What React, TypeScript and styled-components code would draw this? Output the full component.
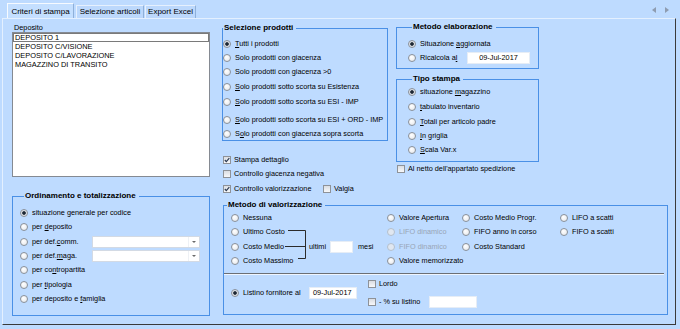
import React from 'react'
import styled, { createGlobalStyle } from 'styled-components'

const GlobalStyle = createGlobalStyle`
  html, body {
    margin: 0;
    padding: 0;
    background: #bedbff;
  }
  body {
    font-family: "Liberation Sans", Arial, sans-serif;
    font-size: 7.3px;
    color: #000;
  }
  u {
    text-underline-offset: 1px;
  }
`

const Window = styled.div`
  width: 680px;
  height: 329px;
  background: #bedbff;
  overflow: hidden;
`

const TabStrip = styled.div`
  display: flex;
  align-items: flex-end;
  height: 18px;
  padding-left: 7px;
`

interface TabProps {
  $active?: boolean
  $w: number
  $mr: number
}

const Tab = styled.div<TabProps>`
  box-sizing: border-box;
  width: ${(p) => p.$w}px;
  height: ${(p) => (p.$active ? 15 : 13)}px;
  margin-right: ${(p) => p.$mr}px;
  padding-top: ${(p) => (p.$active ? 2 : 0)}px;
  font-size: 8px;
  line-height: 12px;
  text-align: center;
  white-space: nowrap;
  border: 1px solid ${(p) => (p.$active ? '#f6faff' : '#e6f0fd')};
  border-bottom: none;
  border-right-color: #8fb0d9;
  background: ${(p) => (p.$active ? '#c4dfff' : '#bcd8fc')};
`

const Scroller = styled.div`
  display: flex;
  gap: 9px;
  align-self: flex-start;
  margin: 7px 11px 0 auto;
`

const Arrow = styled.span<{ $right?: boolean }>`
  width: 0;
  height: 0;
  border-top: 3px solid transparent;
  border-bottom: 3px solid transparent;
  ${(p) => (p.$right ? 'border-left' : 'border-right')}: 4px solid #8e9cb1;
`

const Panel = styled.div`
  box-sizing: border-box;
  display: flex;
  width: 674px;
  height: 307px;
  margin-left: 2px;
  padding: 3px 0 0 9px;
  border: 1px solid;
  border-color: #e4f0ff #3a3a3a #3a3a3a #e4f0ff;
`

const LeftCol = styled.div`
  display: flex;
  flex-direction: column;
  width: 198px;
  flex: none;
`

const FieldLabel = styled.div`
  height: 9px;
  line-height: 9px;
  margin: 1px 0 0 2px;
`

const ListBox = styled.div`
  box-sizing: border-box;
  height: 145px;
  background: #fff;
  border: 1px solid #858a92;
`

const ListItem = styled.div<{ $focus?: boolean }>`
  box-sizing: border-box;
  height: 9px;
  padding-left: 1px;
  font-size: 7.4px;
  line-height: 7px;
  white-space: nowrap;
  border: 1px solid ${(p) => (p.$focus ? '#7a7a7a' : 'transparent')};
`

interface GroupProps {
  $w?: number
  $h: number
  $mt?: number
  $ml?: number
  $pt?: number
  $pl?: number
}

const Group = styled.fieldset<GroupProps>`
  box-sizing: border-box;
  min-inline-size: 0;
  width: ${(p) => (p.$w ? `${p.$w}px` : 'auto')};
  height: ${(p) => p.$h}px;
  margin: ${(p) => p.$mt ?? 0}px 0 0 ${(p) => p.$ml ?? 0}px;
  padding: ${(p) => p.$pt ?? 0}px 0 0 ${(p) => p.$pl ?? 0}px;
  border: 1px solid #4a90e6;
  flex: none;
`

const GroupTitle = styled.legend<{ $indent: number }>`
  margin-left: ${(p) => p.$indent}px;
  padding: 0 3px 0 1px;
  font-size: 8px;
  font-weight: bold;
  line-height: 10px;
`

interface RowProps {
  $h?: number
  $mt?: number
  $ml?: number
  $w?: number
  $off?: boolean
}

const Row = styled.div<RowProps>`
  display: flex;
  align-items: center;
  gap: 4px;
  flex: none;
  width: ${(p) => (p.$w ? `${p.$w}px` : 'auto')};
  height: ${(p) => p.$h ?? 12}px;
  margin: ${(p) => p.$mt ?? 0}px 0 0 ${(p) => p.$ml ?? 0}px;
  line-height: 12px;
  white-space: nowrap;
  color: ${(p) => (p.$off ? '#98a5b6' : '#000')};
`

const CheckRow = styled(Row)`
  gap: 3px;
`

const Radio = styled.span<{ $on?: boolean; $off?: boolean }>`
  box-sizing: border-box;
  flex: none;
  width: 8px;
  height: 8px;
  border-radius: 50%;
  border: 1px solid ${(p) => (p.$off ? '#b3bfcd' : '#8a9099')};
  background: ${(p) =>
    p.$on
      ? 'radial-gradient(circle, #1c2633 0 1.4px, #d9dde3 2.2px, #ffffff 100%)'
      : p.$off
        ? '#e0e7f0'
        : 'radial-gradient(circle at 40% 35%, #ffffff 0, #e2e5e9 100%)'};
`

const Box = styled.span`
  box-sizing: border-box;
  flex: none;
  display: flex;
  align-items: center;
  justify-content: center;
  width: 8px;
  height: 8px;
  border: 1px solid #8e9298;
  background: linear-gradient(#dadde2, #f7f8fa);
`

const Caption = styled.span<{ $w?: number }>`
  display: inline-block;
  width: ${(p) => (p.$w ? `${p.$w}px` : 'auto')};
`

const Combo = styled.div`
  box-sizing: border-box;
  display: flex;
  justify-content: flex-end;
  width: 108px;
  height: 12px;
  background: #fff;
  border: 1px solid #d3dae4;
`

const ComboButton = styled.span`
  display: flex;
  align-items: center;
  justify-content: center;
  width: 10px;
  border-left: 1px solid #eef1f5;
  &::after {
    content: '';
    border-left: 2px solid transparent;
    border-right: 2px solid transparent;
    border-top: 2px solid #6a6a6a;
  }
`

const Field = styled.div<{ $w: number; $ml?: number; $center?: boolean }>`
  box-sizing: border-box;
  flex: none;
  width: ${(p) => p.$w}px;
  height: 12px;
  margin-left: ${(p) => p.$ml ?? 0}px;
  padding: 0 3px;
  background: #fff;
  border: 1px solid #e6edf6;
  line-height: 10px;
  text-align: ${(p) => (p.$center ? 'center' : 'left')};
`

const RightArea = styled.div`
  display: flex;
  flex-direction: column;
  margin-left: 12px;
`

const TopRow = styled.div`
  display: flex;
`

const Column = styled.div<{ $w: number; $mt?: number; $ml?: number }>`
  display: flex;
  flex-direction: column;
  width: ${(p) => p.$w}px;
  margin: ${(p) => p.$mt ?? 0}px 0 0 ${(p) => p.$ml ?? 0}px;
  flex: none;
`

const ValGrid = styled.div`
  display: grid;
  grid-template-columns: 156px 75px 98px 1fr;
  padding: 1px 0 0 7px;
`

const Stack = styled.div<{ $w?: number }>`
  display: flex;
  flex-direction: column;
  width: ${(p) => (p.$w ? `${p.$w}px` : 'auto')};
  flex: none;
`

const Bracketed = styled.div`
  display: flex;
`

const Months = styled.div`
  display: flex;
  align-items: center;
  gap: 4px;
  height: 14.33px;
  margin: 28.66px 0 0 2px;
  white-space: nowrap;
`

const Separator = styled.div`
  height: 0;
  margin: 4.5px 3px 0 0;
  border-top: 1px solid #6b6f75;
  border-bottom: 1px solid #eef5ff;
`

const Listino = styled.div`
  display: flex;
  align-items: center;
  padding: 3px 0 0 7px;
`

const Check = () => (
  <svg width="6" height="6" viewBox="0 0 6 6">
    <path d="M0.8 3 L2.3 4.6 L5.3 1.1" fill="none" stroke="#26364f" strokeWidth="1.1" />
  </svg>
)

interface OptProps {
  on?: boolean
  off?: boolean
  h?: number
  mt?: number
  w?: number
  children: React.ReactNode
}

const Opt: React.FC<OptProps> = ({ on, off, h, mt, w, children }) => (
  <Row $h={h} $mt={mt} $w={w} $off={off}>
    <Radio $on={on} $off={off} />
    <span>{children}</span>
  </Row>
)

interface ChkProps {
  on?: boolean
  mt?: number
  ml?: number
  children?: React.ReactNode
}

const Chk: React.FC<ChkProps> = ({ on, mt, ml, children }) => (
  <CheckRow $mt={mt} $ml={ml}>
    <Box>{on && <Check />}</Box>
    {children}
  </CheckRow>
)

const R = 14.33

const App: React.FC = () => {
  return (
    <Window>
      <GlobalStyle />
      <TabStrip>
        <Tab $active $w={67} $mr={2}>Criteri di stampa</Tab>
        <Tab $w={68} $mr={1}>Selezione articoli</Tab>
        <Tab $w={51} $mr={0}>Export Excel</Tab>
        <Scroller>
          <Arrow />
          <Arrow $right />
        </Scroller>
      </TabStrip>

      <Panel>
        <LeftCol>
          <FieldLabel>Deposito</FieldLabel>
          <ListBox>
            <ListItem $focus>DEPOSITO 1</ListItem>
            <ListItem>DEPOSITO C/VISIONE</ListItem>
            <ListItem>DEPOSITO C/LAVORAZIONE</ListItem>
            <ListItem>MAGAZZINO DI TRANSITO</ListItem>
          </ListBox>

          <Group $h={125} $mt={14} $pt={5} $pl={7}>
            <GroupTitle $indent={4}>Ordinamento e totalizzazione</GroupTitle>
            <Opt on h={R}>situazione generale per codice</Opt>
            <Opt h={R}>per <u>d</u>eposito</Opt>
            <Row $h={R}>
              <Radio />
              <Caption $w={56}>per def.<u>c</u>omm.</Caption>
              <Combo><ComboButton /></Combo>
            </Row>
            <Row $h={R}>
              <Radio />
              <Caption $w={56}>per def.<u>m</u>aga.</Caption>
              <Combo><ComboButton /></Combo>
            </Row>
            <Opt h={R}>per co<u>n</u>tropartita</Opt>
            <Opt h={R}>per <u>t</u>ipologia</Opt>
            <Opt h={R}>per deposito e <u>f</u>amiglia</Opt>
          </Group>
        </LeftCol>

        <RightArea>
          <TopRow>
            <Column $w={166} $mt={1}>
              <Group $h={118} $pt={5} $pl={0}>
                <GroupTitle $indent={0}>Selezione prodotti</GroupTitle>
                <Opt on><u>T</u>utti i prodotti</Opt>
                <Opt mt={2}>Solo prodotti con giacenza</Opt>
                <Opt mt={2}>Solo prodotti con giacenza &gt;0</Opt>
                <Opt mt={3}><u>S</u>olo prodotti sotto scorta su Esistenza</Opt>
                <Opt mt={3}><u>S</u>olo prodotti sotto scorta su ESI - IMP</Opt>
                <Opt mt={6}><u>S</u>olo prodotti sotto scorta su ESI + ORD - IMP</Opt>
                <Opt mt={2}>S<u>o</u>lo prodotti con giacenza sopra scorta</Opt>
              </Group>
              <Chk on mt={13} ml={1}>Stampa dettaglio</Chk>
              <Chk mt={2} ml={1}>Controllo giacenza negativa</Chk>
              <CheckRow $mt={3} $ml={1}>
                <Box><Check /></Box>
                <Caption $w={86}>Controllo valorizzazione</Caption>
                <Box />
                <span>Valgia</span>
              </CheckRow>
            </Column>

            <Column $w={143} $ml={8}>
              <Group $h={47} $pt={6} $pl={11}>
                <GroupTitle $indent={4}>Metodo elaborazione</GroupTitle>
                <Opt on>Situazione <u>a</u>ggiornata</Opt>
                <Row $mt={2}>
                  <Radio />
                  <Caption $w={43}>Ricalcola a<u>l</u></Caption>
                  <Field $w={63} $center>09-Jul-2017</Field>
                </Row>
              </Group>
              <Group $h={88} $mt={5} $pt={2} $pl={11}>
                <GroupTitle $indent={4}>Tipo stampa</GroupTitle>
                <Opt on>situazione <u>m</u>agazzino</Opt>
                <Opt mt={3}><u>t</u>abulato inventario</Opt>
                <Opt mt={3}><u>T</u>otali per articolo padre</Opt>
                <Opt mt={2}><u>I</u>n griglia</Opt>
                <Opt mt={2}><u>S</u>cala Var.x</Opt>
              </Group>
              <Chk mt={1} ml={1}>Al netto dell'appartato spedizione</Chk>
            </Column>
          </TopRow>

          <Group $w={445} $h={115} $mt={5} $ml={1}>
            <GroupTitle $indent={3}>Metodo di valorizzazione</GroupTitle>
            <ValGrid>
              <Bracketed>
                <Stack $w={54}>
                  <Opt h={R}>Nessuna</Opt>
                  <Opt h={R}>Ultimo Costo</Opt>
                  <Opt h={R}>Costo Medio</Opt>
                  <Opt h={R}>Costo Massimo</Opt>
                </Stack>
                <svg width="22" height="57" viewBox="0 0 22 57">
                  <g fill="none" stroke="#2b2b2b" strokeWidth="1">
                    <path d="M3 19.5 H20.5 V47.5 H13" />
                    <path d="M0 35.5 H20.5" />
                  </g>
                </svg>
                <Months>
                  <span>ultimi</span>
                  <Field $w={23} />
                  <span style={{ marginLeft: 1 }}>mesi</span>
                </Months>
              </Bracketed>
              <Stack>
                <Opt h={R}>Valore Apertura</Opt>
                <Opt h={R} off>LIFO dinamico</Opt>
                <Opt h={R} off>FIFO dinamico</Opt>
                <Opt h={R}>Valore memorizzato</Opt>
              </Stack>
              <Stack>
                <Opt h={R}>Costo Medio Progr.</Opt>
                <Opt h={R}>FIFO anno in corso</Opt>
                <Opt h={R}>Costo Standard</Opt>
              </Stack>
              <Stack>
                <Opt h={R}>LIFO a scatti</Opt>
                <Opt h={R}>FIFO a scatti</Opt>
              </Stack>
            </ValGrid>
            <Separator />
            <Listino>
              <Opt on w={78}>Listino fornitore al</Opt>
              <Field $w={48}>09-Jul-2017</Field>
              <Stack>
                <Chk ml={11}>Lordo</Chk>
                <CheckRow $mt={6} $ml={11}>
                  <Box />
                  <Caption $w={47}>- % su listino</Caption>
                  <Field $w={48} />
                </CheckRow>
              </Stack>
            </Listino>
          </Group>
        </RightArea>
      </Panel>
    </Window>
  )
}

export default App
